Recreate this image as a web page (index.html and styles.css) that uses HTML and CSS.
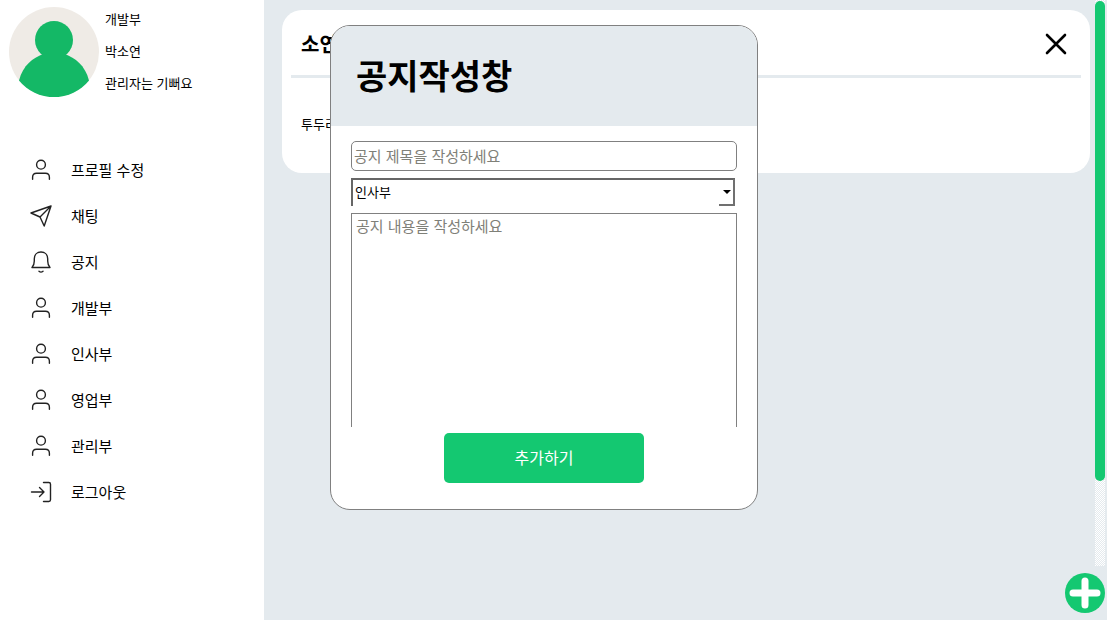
FILE: index.html
```html
<!DOCTYPE html>
<html lang="ko">

<head>
    <meta charset="utf-8">
    <meta name="viewport" content="width=device-width, initial-scale=1.0">
    <title>공지</title>
    <link rel="stylesheet" href="styles.css">
</head>

<body>
    <svg width="0" height="0" class="sprite" aria-hidden="true">
        <symbol id="user" viewBox="0 0 22 22">
            <circle cx="11" cy="5.700" r="4.400" />
            <path d="M2.600 20.300v-2c0-2.600 1.500-4 4-4h8.800c2.500 0 4 1.400 4 4v2" />
        </symbol>
        <symbol id="send" viewBox="0 0 22 22">
            <path d="M21 1L1 8l9 4 4.200 9zM21 1L10 12" />
        </symbol>
        <symbol id="bell" viewBox="0 0 22 22">
            <path d="M2 16.500h18c-1.600-1.600-2.300-3.500-2.300-6.500V7.800C17.700 3.800 15 1 11 1S4.300 3.800 4.300 7.800V10c0 3-.700 4.900-2.300 6.500zM9 20.300c1.200 1 2.800 1 4 0" />
        </symbol>
        <symbol id="logout" viewBox="0 0 22 22">
            <path d="M1.500 11H14M9.500 6.500L14 11l-4.500 4.500M13.500 1.500h5.300c1 0 1.700.700 1.700 1.700v15.600c0 1-.700 1.700-1.700 1.700h-5.300" />
        </symbol>
    </svg>

    <div class="layout">
        <aside class="sidebar">
            <div class="profile">
                <svg class="avatar" viewBox="0 0 90 90" role="img" aria-label="프로필">
                    <circle cx="45" cy="45" r="45" fill="#efebe6" />
                    <circle cx="45" cy="33" r="19" fill="#14b866" />
                    <path d="M10 73.500C14 58 24 51 34 47l22 0C66 51 76 58 80 73.500A45 45 0 0 1 10 73.500z" fill="#14b866" />
                </svg>
                <div class="profile-info">
                    <p>개발부</p>
                    <p>박소연</p>
                    <p>관리자는 기뻐요</p>
                </div>
            </div>
            <nav class="menu">
                <a href="#"><svg class="icon"><use href="#user" /></svg>프로필 수정</a>
                <a href="#"><svg class="icon"><use href="#send" /></svg>채팅</a>
                <a href="#"><svg class="icon"><use href="#bell" /></svg>공지</a>
                <a href="#"><svg class="icon"><use href="#user" /></svg>개발부</a>
                <a href="#"><svg class="icon"><use href="#user" /></svg>인사부</a>
                <a href="#"><svg class="icon"><use href="#user" /></svg>영업부</a>
                <a href="#"><svg class="icon"><use href="#user" /></svg>관리부</a>
                <a href="#"><svg class="icon"><use href="#logout" /></svg>로그아웃</a>
            </nav>
        </aside>

        <main class="content">
            <article class="notice">
                <header class="notice-header">
                    <h2>소연</h2>
                    <button type="button" class="close" aria-label="닫기">
                        <svg viewBox="0 0 22 22">
                            <path d="M2 2l18 18M20 2L2 20" />
                        </svg>
                    </button>
                </header>
                <p class="notice-text">투두리</p>
            </article>

            <form class="modal">
                <h1 class="modal-title">공지작성창</h1>
                <div class="modal-body">
                    <input type="text" class="title-input" placeholder="공지 제목을 작성하세요" aria-label="공지 제목">
                    <div class="select-box">
                        <select aria-label="부서">
                            <option>인사부</option>
                            <option>개발부</option>
                            <option>영업부</option>
                            <option>관리부</option>
                        </select>
                        <span class="select-arrow"></span>
                    </div>
                    <textarea class="text-input" placeholder="공지 내용을 작성하세요" aria-label="공지 내용"></textarea>
                    <button type="submit" class="submit">추가하기</button>
                </div>
            </form>

            <div class="scrollbar">
                <div class="scrollbar-thumb"></div>
            </div>
            <button type="button" class="add" aria-label="공지 추가">
                <svg viewBox="0 0 40 40">
                    <path d="M20 8v24M8 20h24" />
                </svg>
            </button>
        </main>
    </div>
</body>

</html>
```
FILE: styles.css
```css
*,
*::after,
*::before {
    margin: 0;
    padding: 0;
    box-sizing: border-box;
}

body,
input,
select,
textarea,
button {
    font-family: "Noto Sans CJK KR", sans-serif;
}

body {
    color: #000;
}

button {
    border: none;
    background: none;
    cursor: pointer;
}

.sprite {
    position: absolute;
}

.layout {
    display: flex;
    min-height: 100vh;
}

.sidebar {
    flex: 0 0 264px;
    background-color: #fff;
}

.profile {
    display: flex;
    gap: 6px;
    padding: 7px 9px 0;
}

.avatar {
    width: 90px;
    height: 90px;
}

.profile-info {
    display: flex;
    flex-direction: column;
    gap: 12px;
    padding-top: 2px;
    font-size: 13px;
    line-height: 20px;
}

.menu {
    display: flex;
    flex-direction: column;
    padding: 50px 30px 0;
}

.menu a {
    display: flex;
    align-items: center;
    gap: 19px;
    height: 46px;
    color: #000;
    font-size: 15px;
    line-height: 20px;
    text-decoration: none;
}

.icon {
    width: 22px;
    height: 22px;
    fill: none;
    stroke: #222;
    stroke-width: 1.4;
    stroke-linecap: round;
    stroke-linejoin: round;
}

.content {
    position: relative;
    flex: 1;
    padding: 10px 17px 10px 18px;
    background-color: #e4eaee;
}

.notice {
    padding: 0 9px 38px;
    border-radius: 20px;
    background-color: #fff;
}

.notice-header {
    display: flex;
    align-items: center;
    justify-content: space-between;
    height: 68px;
    padding: 2px 14px 0 10px;
    border-bottom: 3px solid #e4eaee;
}

.notice-header h2 {
    font-size: 20px;
}

.close,
.close svg {
    display: block;
    width: 22px;
    height: 22px;
}

.close svg {
    fill: none;
    stroke: #000;
    stroke-width: 2.6;
    stroke-linecap: round;
}

.notice-text {
    padding: 35px 10px 1px;
    font-size: 13px;
    line-height: 21px;
}

/* notice form, floats over the list */
.modal {
    position: absolute;
    top: 25px;
    left: 66px;
    width: 428px;
    border: 1px solid #808080;
    border-radius: 20px;
    background-color: #fff;
    overflow: hidden;
}

.modal-title {
    height: 100px;
    padding: 0 25px;
    background-color: #e4eaee;
    font-size: 34px;
    line-height: 98px;
}

.modal-body {
    display: flex;
    flex-direction: column;
    padding: 15px 20px 26px;
}

.title-input {
    height: 30px;
    padding: 0 2px 2px;
    border: 1px solid #808080;
    border-radius: 5px;
    font-size: 15px;
}

.title-input::placeholder,
.text-input::placeholder {
    color: #7f8078;
}

.select-box {
    position: relative;
    height: 28px;
    margin: 7px 2px 7px 0;
}

.select-box select {
    display: block;
    width: 100%;
    height: 28px;
    padding: 0 2px 4px;
    border: solid #666;
    border-width: 2px 0 0 2px;
    border-radius: 0;
    background-color: #fff;
    font-size: 13px;
    appearance: none;
}

.select-arrow {
    position: absolute;
    right: 0;
    bottom: 0;
    width: 16px;
    height: 27px;
    border: solid #707070;
    border-width: 0 2px 2px 0;
    pointer-events: none;
}

.select-arrow::after {
    content: "";
    position: absolute;
    top: 11px;
    left: 4px;
    border: 4px solid transparent;
    border-top-color: #000;
    border-bottom: none;
}

.text-input {
    height: 214px;
    padding: 0 4px;
    border: 1px solid #808080;
    border-bottom: none;
    font-size: 15px;
    line-height: 24px;
    resize: none;
}

.submit {
    align-self: center;
    width: 200px;
    height: 50px;
    margin-top: 6px;
    padding-bottom: 2px;
    border-radius: 5px;
    background-color: #14c871;
    color: #fff;
    font-size: 16px;
}

.scrollbar {
    position: absolute;
    top: 0;
    right: 2px;
    bottom: 54px;
    width: 10px;
    padding-top: 1px;
    background: repeating-conic-gradient(#fff 0 25%, #e4eaee 0 50%) 0 0 / 2px 2px;
}

.scrollbar-thumb {
    height: 85%;
    border-radius: 5px;
    background-color: #14c871;
}

.add {
    position: absolute;
    right: 2px;
    bottom: 7px;
    width: 40px;
    height: 40px;
    border-radius: 50%;
    background-color: #14c871;
}

.add svg {
    display: block;
    stroke: #fff;
    stroke-width: 7;
    stroke-linecap: round;
}
```
